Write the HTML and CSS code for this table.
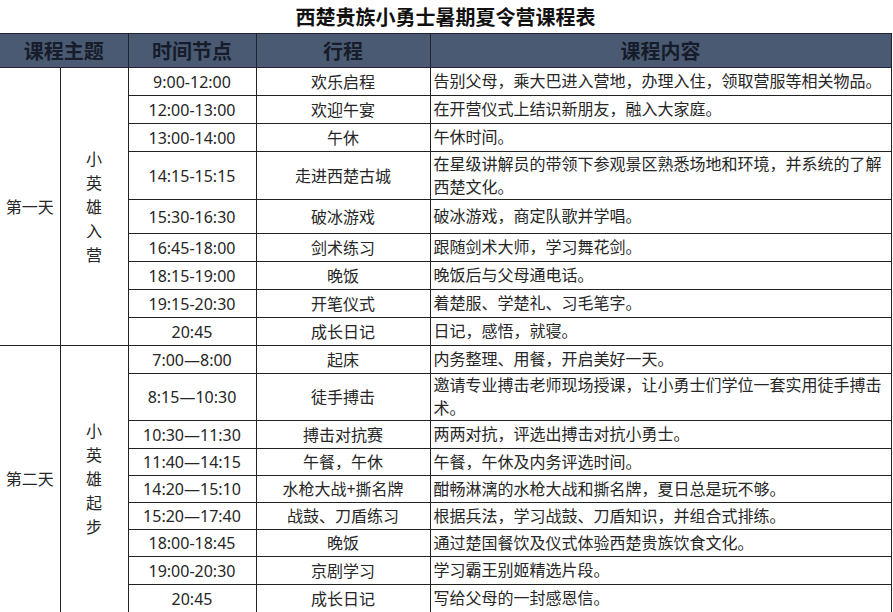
FILE: index.html
```html
<!DOCTYPE html>
<html lang="zh">
<head>
<meta charset="utf-8">
<title>西楚贵族小勇士暑期夏令营课程表</title>
<link rel="stylesheet" href="styles.css">
</head>
<body>
<h1 class="title">西楚贵族小勇士暑期夏令营课程表</h1>
<table class="schedule">
  <colgroup>
    <col class="c-day"><col class="c-theme"><col class="c-time"><col class="c-act"><col class="c-desc">
  </colgroup>
  <thead>
    <tr class="head"><th colspan="2" class="first">课程主题</th><th>时间节点</th><th>行程</th><th>课程内容</th></tr>
  </thead>
  <tbody>
    <tr class="h28"><td rowspan="9" class="day first">第一天</td><td rowspan="9" class="theme"><span class="vert">小英雄入营</span></td><td class="time">9:00-12:00</td><td class="act">欢乐启程</td><td class="desc">告别父母，乘大巴进入营地，办理入住，领取营服等相关物品。</td></tr>
    <tr class="h28"><td class="time">12:00-13:00</td><td class="act">欢迎午宴</td><td class="desc">在开营仪式上结识新朋友，融入大家庭。</td></tr>
    <tr class="h28"><td class="time">13:00-14:00</td><td class="act">午休</td><td class="desc">午休时间。</td></tr>
    <tr class="h48"><td class="time">14:15-15:15</td><td class="act">走进西楚古城</td><td class="desc">在星级讲解员的带领下参观景区熟悉场地和环境，并系统的了解西楚文化。</td></tr>
    <tr class="h34"><td class="time">15:30-16:30</td><td class="act">破冰游戏</td><td class="desc">破冰游戏，商定队歌并学唱。</td></tr>
    <tr class="h28"><td class="time">16:45-18:00</td><td class="act">剑术练习</td><td class="desc">跟随剑术大师，学习舞花剑。</td></tr>
    <tr class="h28"><td class="time">18:15-19:00</td><td class="act">晚饭</td><td class="desc">晚饭后与父母通电话。</td></tr>
    <tr class="h28"><td class="time">19:15-20:30</td><td class="act">开笔仪式</td><td class="desc">着楚服、学楚礼、习毛笔字。</td></tr>
    <tr class="h28"><td class="time">20:45</td><td class="act">成长日记</td><td class="desc">日记，感悟，就寝。</td></tr>

    <tr class="h28"><td rowspan="9" class="day first">第二天</td><td rowspan="9" class="theme"><span class="vert">小英雄起步</span></td><td class="time">7:00—8:00</td><td class="act">起床</td><td class="desc">内务整理、用餐，开启美好一天。</td></tr>
    <tr class="h46"><td class="time">8:15—10:30</td><td class="act">徒手搏击</td><td class="desc">邀请专业搏击老师现场授课，让小勇士们学位一套实用徒手搏击术。</td></tr>
    <tr class="h28"><td class="time">10:30—11:30</td><td class="act">搏击对抗赛</td><td class="desc">两两对抗，评选出搏击对抗小勇士。</td></tr>
    <tr class="h27"><td class="time">11:40—14:15</td><td class="act">午餐，午休</td><td class="desc">午餐，午休及内务评选时间。</td></tr>
    <tr class="h27"><td class="time">14:20—15:10</td><td class="act">水枪大战+撕名牌</td><td class="desc">酣畅淋漓的水枪大战和撕名牌，夏日总是玩不够。</td></tr>
    <tr class="h27"><td class="time">15:20—17:40</td><td class="act">战鼓、刀盾练习</td><td class="desc">根据兵法，学习战鼓、刀盾知识，并组合式排练。</td></tr>
    <tr class="h27"><td class="time">18:00-18:45</td><td class="act">晚饭</td><td class="desc">通过楚国餐饮及仪式体验西楚贵族饮食文化。</td></tr>
    <tr class="h28"><td class="time">19:00-20:30</td><td class="act">京剧学习</td><td class="desc">学习霸王别姬精选片段。</td></tr>
    <tr class="h28"><td class="time">20:45</td><td class="act">成长日记</td><td class="desc">写给父母的一封感恩信。</td></tr>

    <tr class="h28"><td class="day first"></td><td class="theme"></td><td class="time"></td><td class="act"></td><td class="desc"></td></tr>
  </tbody>
</table>
</body>
</html>
```

FILE: styles.css
```css
html {
  overflow: hidden;
  background: #ffffff;
}

body {
  margin: 0;
  width: 893px;
  font-family: "Noto Sans", "Noto Sans CJK SC", sans-serif;
  color: #262626;
  background: #ffffff;
}

.title {
  margin: 0;
  height: 33px;
  line-height: 33px;
  width: 891px;
  text-align: center;
  font-family: "Noto Sans CJK SC", sans-serif;
  font-size: 20px;
  font-weight: 700;
  color: #111111;
}

.schedule {
  border-collapse: collapse;
  table-layout: fixed;
  width: 891px;
  font-size: 16px;
}

.c-day { width: 60px; }
.c-theme { width: 68px; }
.c-time { width: 128px; }
.c-act { width: 174px; }
.c-desc { width: 461px; }

.schedule th,
.schedule td {
  border: 1px solid #222222;
  padding: 0;
  vertical-align: middle;
  text-align: center;
  line-height: 20px;
}

.schedule .first {
  border-left: none;
}

.head {
  height: 34px;
}

.head th {
  background: #4a5a72;
  color: #161c2a;
  font-family: "Noto Sans CJK SC", sans-serif;
  font-size: 20px;
  font-weight: 700;
  border-color: #1e2430;
}

.h27 { height: 27px; }
.h28 { height: 28px; }
.h34 { height: 34px; }
.h46 { height: 46px; }
.h48 { height: 48px; }

.schedule .day {
  font-size: 16px;
}

.vert {
  display: inline-block;
  width: 1em;
  line-height: 24px;
  word-break: break-all;
}

.schedule .desc {
  text-align: left;
  padding: 0 3px;
  line-height: 23px;
}
```
